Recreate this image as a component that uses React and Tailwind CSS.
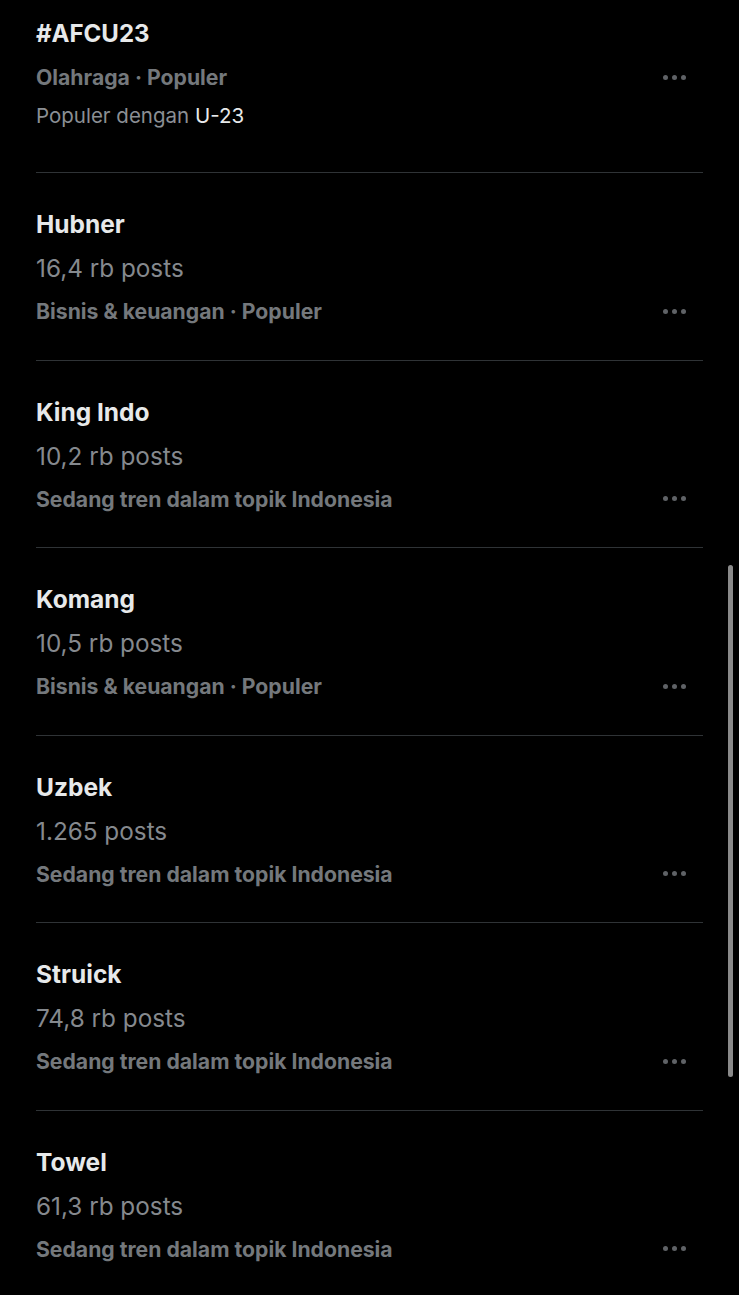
import React from "react";

const font = { fontFamily: "Inter, 'Noto Sans', sans-serif" };

function Dots() {
  return (
    <div className="flex items-center gap-[4px] mr-[17px]">
      <span className="w-[5px] h-[5px] rounded-full bg-[#5f6266]" />
      <span className="w-[5px] h-[5px] rounded-full bg-[#5f6266]" />
      <span className="w-[5px] h-[5px] rounded-full bg-[#5f6266]" />
    </div>
  );
}

const items = [
  { t: "Hubner", p: "16,4 rb posts", c: "Bisnis & keuangan · Populer" },
  { t: "King Indo", p: "10,2 rb posts", c: "Sedang tren dalam topik Indonesia" },
  { t: "Komang", p: "10,5 rb posts", c: "Bisnis & keuangan · Populer" },
  { t: "Uzbek", p: "1.265 posts", c: "Sedang tren dalam topik Indonesia" },
  { t: "Struick", p: "74,8 rb posts", c: "Sedang tren dalam topik Indonesia" },
  { t: "Towel", p: "61,3 rb posts", c: "Sedang tren dalam topik Indonesia" },
];

export default function App() {
  return (
    <div className="relative w-[739px] h-[1295px] bg-black overflow-hidden" style={font}>
      <div className="ml-[36px] mr-[36px]">
        <div className="h-[172px] pt-[18px] flex flex-col">
          <div className="text-[24px] leading-[32px] font-bold text-[#e7e9ea]">#AFCU23</div>
          <div className="mt-[11px] flex items-center justify-between">
            <span className="text-[21.2px] leading-[32px] font-bold text-[#74787c]">Olahraga · Populer</span>
            <Dots />
          </div>
          <div className="mt-[7px] text-[20.5px] leading-[32px] text-[#8b8f94]">
            Populer dengan <span className="text-[#e7e9ea]">U-23</span>
          </div>
        </div>
        {items.map((it) => (
          <div key={it.t} className="h-[187.5px] border-t border-[#2f3336] pt-[35px] flex flex-col">
            <div className="text-[24.5px] leading-[32px] font-bold text-[#e7e9ea]">{it.t}</div>
            <div className="mt-[12px] text-[24.3px] leading-[32px] text-[#85898e]">{it.p}</div>
            <div className="mt-[11px] flex items-center justify-between">
              <span className="text-[21.2px] leading-[32px] font-bold text-[#74787c]">{it.c}</span>
              <Dots />
            </div>
          </div>
        ))}
      </div>
      <div className="absolute left-[728px] top-[565px] w-[5px] h-[512px] rounded-full bg-[#8a8a8a]" />
    </div>
  );
}
